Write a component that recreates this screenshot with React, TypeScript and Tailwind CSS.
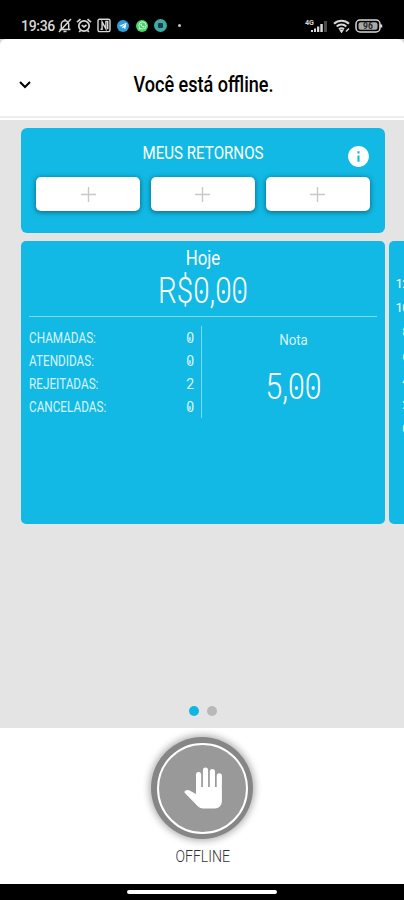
import { JSX } from "react";
import { MdInfo } from "react-icons/md";
import { FaTelegramPlane, FaWhatsapp } from "react-icons/fa";

interface Stat {
    label: string;
    value: string;
}

const stats: Stat[] = [
    { label: "CHAMADAS:", value: "0" },
    { label: "ATENDIDAS:", value: "0" },
    { label: "REJEITADAS:", value: "2" },
    { label: "CANCELADAS:", value: "0" },
];

const axis = ["12", "10", "8", "6", "4", "2", "0"];

// Digits with a small dot inside every zero
function Digits({ text, dot }: { text: string; dot: string }): JSX.Element {
    return (
        <>
            {text.split("").map((c, i) => (
                <span key={i} className="relative inline-block">
                    {c}
                    {c === "0" && (
                        <span className={`absolute left-1/2 top-1/2 -translate-x-1/2 -translate-y-1/2 rounded-full ${dot}`} />
                    )}
                </span>
            ))}
        </>
    );
}

function HandIcon(): JSX.Element {
    return (
        <svg width="40" height="44" viewBox="0 0 40 44" fill="currentColor">
            <path d="M13 28V8.6a2.6 2.6 0 0 1 5.2 0V21h1.7V4a2.6 2.6 0 0 1 5.2 0v17h1.7V5.6a2.6 2.6 0 0 1 5.2 0V21h1.7V9.8a2.6 2.6 0 0 1 5.2 0V35.5a7 7 0 0 1-7 7H20a7 7 0 0 1-4.9-2L1.6 26.8Q1 25.5 2.5 24.6Q4.500 23.500 6.500 24.600Z" />
        </svg>
    );
}

function StatusBar(): JSX.Element {
    return (
        <div className="flex h-[39px] shrink-0 items-center bg-black pl-[21px] pr-[21px] pt-3 text-[#d8d8d8]">
            <span className="w-[37px] whitespace-nowrap text-[14px] font-medium leading-none tracking-[-0.3px]">19:36</span>
            <svg width="14" height="15" viewBox="0 0 14 15" fill="none" stroke="currentColor" strokeWidth="1.5">
                <path d="M1.500 11.500h11M3.300 11V6.500a3.700 3.700 0 0 1 7.400 0V11M7 2.800V1M5.500 13.500h3M1 14 13 1" />
            </svg>
            <svg className="ml-[4px]" width="16" height="15" viewBox="0 0 16 15" fill="none" stroke="currentColor" strokeWidth="1.7">
                <circle cx="8" cy="8" r="5.2" />
                <path d="M1 4.200 4.500 1.200M15 4.200l-3.500-3M5.800 7.200 8 9l2.500-2M4.500 12.500 3.200 14M11.500 12.500l1.300 1.500" />
            </svg>
            <svg className="ml-[5px]" width="14" height="15" viewBox="0 0 14 15" fill="none" stroke="currentColor" strokeWidth="1.4">
                <rect x="1" y="1.2" width="12" height="12.4" rx="1.5" />
                <path d="M3.500 11.300h1.600V4l3.800 6.800V3.500h1.800v7.800" />
            </svg>
            <span className="ml-[6px] flex size-[12px] items-center justify-center rounded-full bg-[#2c9fdc] text-white">
                <FaTelegramPlane size={8} />
            </span>
            <span className="ml-[7px] flex size-[12px] items-center justify-center rounded-full bg-[#48d564] text-white">
                <FaWhatsapp size={9} />
            </span>
            <span className="ml-[6px] flex size-[13px] items-center justify-center rounded-full bg-[#41aaa5]">
                <span className="size-[5px] rounded-[1px] bg-[#143f49]" />
            </span>
            <span className="ml-[11px] size-[3px] rounded-full bg-[#c8c8c8]" />
            <div className="ml-auto flex items-center">
                <svg width="25" height="14" viewBox="0 0 25 14" fill="currentColor">
                    <text x="1" y="5.8" fontSize="7" fontWeight="700" textLength="9" lengthAdjust="spacingAndGlyphs">4G</text>
                    <path d="M7 11h2v2H7zM10 9.500h2V13h-2zM13 7.500h2.300V13H13zM16.300 5h2.500v8h-2.500z" />
                    <path d="M20 2h3v11h-3z" fill="#4a4a4a" />
                </svg>
                <svg className="ml-[4px]" width="18" height="14" viewBox="0 0 18 14" fill="none" stroke="currentColor" strokeWidth="2">
                    <path d="M1 4.700a11 11 0 0 1 15 0M3.700 7.500a7 7 0 0 1 9.600 0M6 10.200a3.500 3.500 0 0 1 5 0" />
                    <path d="M7.500 11.500h2L8.500 13zM13 12.500l3-3" strokeWidth="1.5" />
                </svg>
                <svg className="ml-[4px]" width="28" height="14" viewBox="0 0 28 14" fill="none" stroke="currentColor" strokeWidth="1.5">
                    <rect x="1" y="1" width="24" height="12" rx="4" />
                    <rect x="3.5" y="3.3" width="19" height="7.4" rx="2" fill="#a8a8a8" stroke="none" />
                    <path d="M26 5.500v3" strokeWidth="2.5" />
                    <text x="8" y="10" fontSize="8.5" fontWeight="700" fill="#222" stroke="none">96</text>
                </svg>
            </div>
        </div>
    );
}

function App(): JSX.Element {
    return (
        <div className="flex h-[900px] w-[404px] flex-col overflow-hidden bg-white font-['Roboto','Liberation_Sans',sans-serif]">
            <StatusBar />

            <div className="bg-[#d9d9d9]">
                <header className="grid h-[77px] grid-cols-[50px_1fr_47px] items-center rounded-t-[6px] bg-white pt-[15px] text-black">
                    <div className="flex justify-center">
                        <svg width="12" height="8" viewBox="0 0 12 8" fill="none" stroke="currentColor" strokeWidth="2">
                            <path d="M1 1l5 5 5-5" />
                        </svg>
                    </div>
                    <h1 className="origin-center scale-x-[0.84] whitespace-nowrap text-center text-[21.5px] font-medium">Você está offline.</h1>
                </header>
            </div>
            <div className="h-[4px] shrink-0 border-b-2 border-t-2 border-b-white border-t-[#ececec]" />

            <main className="flex h-[608px] shrink-0 flex-col bg-[#e4e4e4] pl-[21px] pt-[8px]">
                <section className="relative h-[105px] w-[364px] shrink-0 rounded-[6px] bg-[#11b9e4] px-[15px] text-white">
                    <h2 className="scale-x-[0.84] pt-[13px] text-center text-[18px] leading-[24px]">MEUS RETORNOS</h2>
                    <MdInfo size={25} className="absolute right-[14px] top-[16px]" />
                    <div className="mt-[12px] grid grid-cols-3 gap-[10.5px]">
                        {[0, 1, 2].map((i) => (
                            <button key={i} className="flex h-[34px] items-center justify-center rounded-[5px] bg-white shadow-[0_1px_4px_1px_rgba(0,60,80,0.5)]">
                                <svg width="15" height="15" viewBox="0 0 15 15" stroke="#c8c8c8" strokeWidth="1.4">
                                    <path d="M7.500 0v15M0 7.500h15" />
                                </svg>
                            </button>
                        ))}
                    </div>
                </section>

                <div className="mt-[8px] flex h-[283px] shrink-0 gap-[4px] overflow-hidden">
                    <section className="flex w-[364px] shrink-0 flex-col rounded-[5px] bg-[#11b9e4] px-[8px] text-white">
                        <h2 className="scale-x-[0.84] pt-[4px] text-center text-[20px] leading-[26px]">Hoje</h2>
                        <div className="scale-x-[0.82] text-center text-[36px] font-light leading-[40px]">
                            R$<Digits text="0,00" dot="mt-px size-[4px] bg-white/90" />
                        </div>
                        <div className="mt-[5px] border-t border-[#7ed9f0]" />
                        <div className="mt-[9px] flex h-[92px]">
                            <ul className="flex w-[173px] flex-col border-r border-[#7ed9f0] pr-[7px] pt-[1px] text-[#d9f4fb]">
                                {stats.map((s) => (
                                    <li key={s.label} className="flex h-[23px] shrink-0 items-center justify-between text-[14px]">
                                        <span className="origin-left scale-x-[0.84]">{s.label}</span>
                                        <span><Digits text={s.value} dot="h-[4px] w-[2px] bg-white/60" /></span>
                                    </li>
                                ))}
                            </ul>
                            <div className="flex-1 pl-[8px] text-center">
                                <div className="scale-x-[0.86] pt-[4px] text-[15.5px] leading-[20px] text-[#d9f4fb]">Nota</div>
                                <div className="mt-[17px] scale-x-[0.84] text-[36px] font-light leading-[40px]">
                                    <Digits text="5,00" dot="mt-px size-[4px] bg-white/90" />
                                </div>
                            </div>
                        </div>
                    </section>
                    <section className="w-[200px] shrink-0 rounded-[5px] bg-[#11b9e4] pt-[31px] text-white">
                        {axis.map((n) => (
                            <div key={n} className="h-[24.2px] w-[20px] text-right text-[13px] leading-[24px] tracking-[-0.5px]">{n}</div>
                        ))}
                    </section>
                </div>

                <div className="mb-[12px] mt-auto flex justify-center gap-[8px] pr-[19px]">
                    <span className="size-[10px] rounded-full bg-[#11b5df]" />
                    <span className="size-[10px] rounded-full bg-[#b8b8b8]" />
                </div>
            </main>

            <footer className="flex flex-1 flex-col items-center bg-white pt-[9px]">
                <button className="flex size-[102px] items-center justify-center rounded-full bg-[#868686] shadow-[0_0_7px_2px_rgba(0,0,0,0.3)]">
                    <span className="flex size-[91px] items-center justify-center rounded-full border-2 border-white bg-[#999999] pl-[2px] text-white">
                        <HandIcon />
                    </span>
                </button>
                <span className="mt-[6px] scale-x-[0.83] pl-[2px] text-[17px] font-light leading-[22px] text-[#333]">OFFLINE</span>
            </footer>

            <div className="flex h-[16px] shrink-0 justify-center bg-black pt-[6px]">
                <div className="h-[4px] w-[150px] rounded-full bg-white" />
            </div>
        </div>
    );
}

export default App;
